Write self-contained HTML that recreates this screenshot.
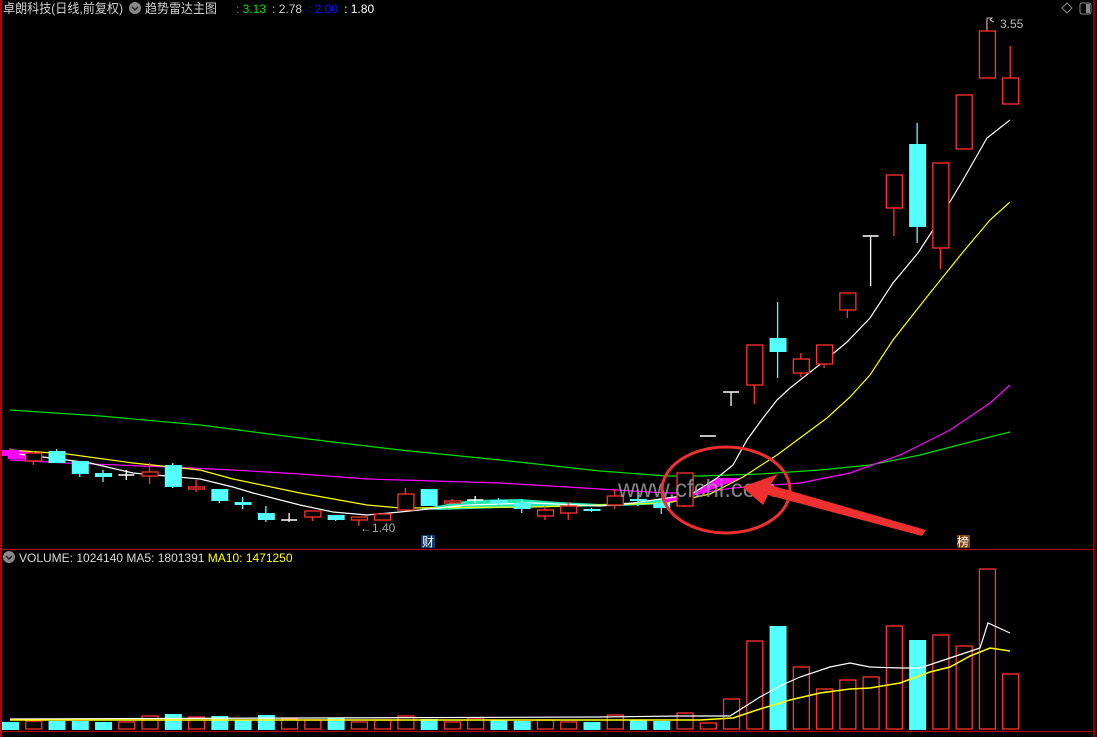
<!DOCTYPE html><html><head><meta charset="utf-8"><style>
body{margin:0;background:#000;width:1097px;height:737px;overflow:hidden;font-family:"Liberation Sans","Noto Sans CJK SC",sans-serif}
svg{position:absolute;left:0;top:0}
</style></head><body>
<svg id="s" width="1097" height="737" xmlns="http://www.w3.org/2000/svg">
<rect width="1097" height="737" fill="#000"/>
<line x1="1" y1="0" x2="1" y2="737" stroke="#b00" stroke-width="2"/>
<line x1="1094" y1="0" x2="1094" y2="737" stroke="#b00" stroke-width="1.5"/>
<line x1="0" y1="549.5" x2="1094" y2="549.5" stroke="#b00"/>
<line x1="0" y1="731.5" x2="1094" y2="731.5" stroke="#b00"/>
<text x="3" y="13" fill="#d0d0d0" font-size="13" textLength="120" lengthAdjust="spacingAndGlyphs">卓朗科技(日线,前复权)</text>
<circle cx="135" cy="8" r="6" fill="#888"/><path d="M132 7l3 3 3-3" stroke="#222" fill="none" stroke-width="1.5"/>
<text x="145" y="13" fill="#d0d0d0" font-size="13" textLength="72" lengthAdjust="spacingAndGlyphs">趋势雷达主图</text>
<text x="236" y="13" font-size="12"><tspan fill="#00e000">: 3.13</tspan><tspan fill="#ccc" dx="6">: 2.78</tspan><tspan fill="#1010ff" dx="6">: 2.00</tspan><tspan fill="#fff" dx="6">: 1.80</tspan></text>
<path d="M1067 3l5 5-5 5-5-5z" stroke="#888" fill="none"/>
<rect x="1080" y="3" width="11" height="11" rx="2" stroke="#888" fill="none"/><rect x="1086" y="4" width="4" height="9" fill="#888"/>
<circle cx="9" cy="557" r="6" fill="#888"/><path d="M6 556l3 3 3-3" stroke="#222" fill="none" stroke-width="1.5"/>
<text x="19" y="562" fill="#d8d8d8" font-size="12">VOLUME: 1024140  MA5: 1801391  <tspan fill="#ffff00">MA10: 1471250</tspan></text>
<g id="g"></g>
<text x="360" y="532" fill="#aaa" font-size="12">←1.40</text>
<path d="M987 30V18h5l-2 2 4 2" stroke="#bbb" fill="none"/>
<text x="1000" y="28" fill="#bbb" font-size="12">3.55</text>
<rect x="421" y="535" width="14" height="13" fill="#123a6a"/><text x="422" y="546" fill="#fff" font-size="12">财</text>
<rect x="957" y="535" width="13" height="13" fill="#7a4010"/><text x="957" y="546" fill="#fff" font-size="12">榜</text>
<text x="618" y="497" fill="#999" fill-opacity="0.85" font-size="25" textLength="158" lengthAdjust="spacingAndGlyphs">www.cfchi.com</text>
<ellipse cx="726" cy="490" rx="64" ry="43" stroke="#ee3030" stroke-width="3" fill="none"/>
<polygon points="926,530 770,485 778,474 742,487 763,505 768,495 922,536" fill="#ee3030"/>
</svg>
<script>
var g=document.getElementById('g'),h='';
function X(i){return 10+23.26*i}
var C=[['m',450,456,448,458],['r',453,461,451,465],['c',451,463,449,463],['c',461,474,461,477],['c',473,477,470,482],['w',475,475,470,480],['r',472,476,463,484],['c',465,487,463,488],['r',487,489,480,492],['c',489,501,489,503],['c',502,505,497,509],['c',513,520,506,522],['w',520,520,513,522],['r',511,517,511,521],['c',515,520,515,521],['r',517,520,517,526],['r',514,520,514,520],['r',494,510,488,510],['c',489,506,489,506],['r',501,503,499,504],['w',500,500,496,503],['c',500,503,498,505],['c',503,509,499,513],['r',510,516,506,520],['r',506,513,502,520],['c',509,510,508,512],['r',496,505,489,509],['c',499,501,492,506],['c',503,508,501,514],['r',473,506,473,507],['w',436,436,436,436],['w',392,392,392,406],['r',345,385,345,404],['c',338,352,302,378],['r',359,373,353,377],['r',345,364,345,368],['r',293,310,293,318],['w',236,236,236,286],['r',175,208,175,236],['c',144,227,123,243],['r',163,248,163,269],['r',95,149,95,149],['r',31,78,20,78],['r',78,104,46,104]];
var V=[722,721,721,721,722,722,716,714,717,716,720,715,719,720,718,722,720,716,719,722,718,720,721,720,722,722,715,720,721,713,723,699,641,626,667,689,680,677,626,640,635,646,569,674];
function line(p,c,w){return '<polyline points="'+p.join(' ')+'" fill="none" stroke="'+c+'" stroke-width="'+(w||1.2)+'"/>'}
var W=[[10,453],[67,460],[90,463],[133,473],[200,479],[233,487],[253,493],[300,505],[333,512],[367,515],[400,512],[467,505],[533,503],[600,506],[633,503],[667,498],[690,495],[717,478],[733,465],[747,440],[763,418],[777,400],[790,388],[823,362],[847,342],[870,318],[893,283],[918,253],[933,230],[963,180],[987,138],[1010,120]];
var Y=[[10,450],[67,454],[133,463],[200,470],[233,479],[300,493],[367,505],[400,508],[533,507],[667,503],[710,494],[743,477],[777,455],[800,438],[827,418],[850,397],[870,375],[893,340],[930,293],[963,252],[990,220],[1010,202]];
var M=[[10,460],[67,463],[167,467],[233,470],[300,474],[367,479],[400,480],[500,483],[567,487],[633,491],[667,493],[700,493],[733,488],[800,483],[850,473],[900,455],[950,430],[990,403],[1010,385]];
var G=[[10,410],[100,416],[200,425],[300,438],[400,450],[500,460],[600,471],[667,476],[700,476],[760,474],[820,470],[870,465],[920,455],[970,442],[1010,432]];
h+='<polygon points="420,509 470,500 520,499 560,502 600,504 640,502 665,498 665,504 620,506 560,507 500,508 440,510" fill="#20e8b0"/>';
h+='<polygon points="665,498 690,494 717,478 742,478 700,494 665,504" fill="#ff00ff"/>';
h+='<polygon points="8,450 30,452 30,460 8,459" fill="#ff00ff"/>';
h+=line(G,'#00dd00')+line(M,'#ff00ff')+line(Y,'#ffff00')+line(W,'#ffffff');
for(var i=0;i<C.length;i++){var c=C[i],x=X(i),col=c[0]=='r'?'#ff3232':c[0]=='c'?'#54ffff':c[0]=='m'?'#ff00ff':'#fff';
h+='<line x1="'+x+'" y1="'+c[3]+'" x2="'+x+'" y2="'+c[4]+'" stroke="'+col+'" stroke-width="1.3"/>';
if(c[0]=='w'){h+='<line x1="'+(x-8)+'" y1="'+c[1]+'" x2="'+(x+8)+'" y2="'+c[1]+'" stroke="#fff" stroke-width="1.5"/>'}
else{var hh=Math.max(c[2]-c[1],2);h+=c[0]=='r'?'<rect x="'+(x-7.5)+'" y="'+c[1]+'" width="16" height="'+hh+'" fill="#000" stroke="#ff3232" stroke-width="1.3"/>':'<rect x="'+(x-8)+'" y="'+c[1]+'" width="17" height="'+hh+'" fill="'+col+'"/>'}
var v=V[i],vc=(c[0]=='c'||c[0]=='m')?'c':'r';
h+=vc=='r'?'<rect x="'+(x-7.5)+'" y="'+v+'" width="16" height="'+(729-v)+'" fill="none" stroke="#ff3232" stroke-width="1.3"/>':'<rect x="'+(x-8)+'" y="'+v+'" width="17" height="'+(730-v)+'" fill="#54ffff"/>';}
var VW=[[10,719],[300,718],[600,717],[680,716],[730,716],[760,697],[780,686],[800,677],[830,667],[850,663],[870,667],[900,668],[920,668],[950,658],[980,648],[988,623],[1010,633]];
var VY=[[10,720],[700,720],[733,718],[760,709],[790,700],[820,693],[850,689],[870,688],[900,683],[930,672],[950,667],[970,656],[990,648],[1010,651]];
h+=line(VW,'#fff')+line(VY,'#ffff00',1.5);
g.innerHTML=h;
</script>
</body></html>
